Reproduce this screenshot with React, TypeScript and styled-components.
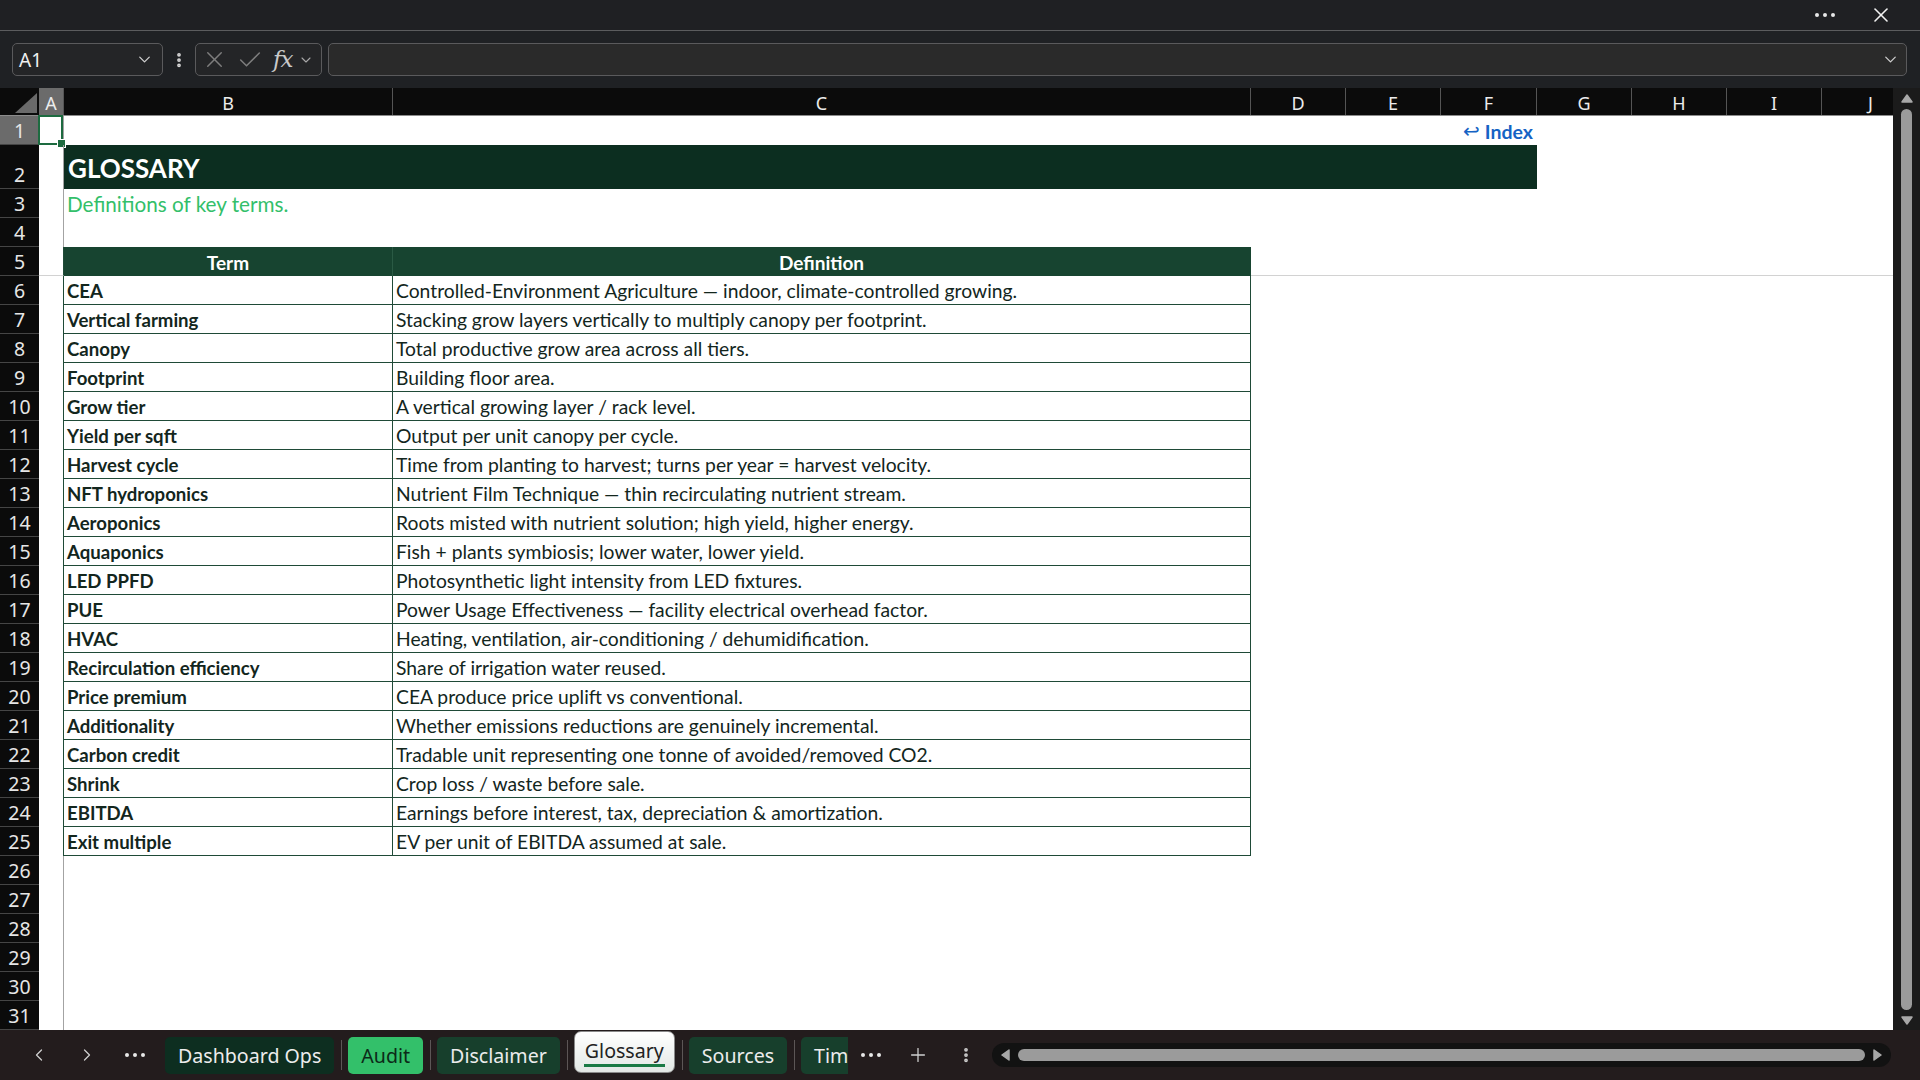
import React from "react";
import styled, { createGlobalStyle } from "styled-components";
import { X, Check, ChevronDown, ChevronLeft, ChevronRight, Plus, EllipsisVertical } from "lucide-react";

const GlobalStyle = createGlobalStyle`
  html, body {
    margin: 0;
    padding: 0;
    background: #1f2023;
    overflow: hidden;
  }
  * { box-sizing: border-box; }
`;

// column widths: row header, A, B, C, D..J
const COLS = "39px 25px 329px 858px 95px 95px 96px 95px 95px 95px 71px";
const LETTERS = ["A", "B", "C", "D", "E", "F", "G", "H", "I", "J"];

const UI_FONT = `"Noto Sans", "Open Sans", sans-serif`;
const SHEET_FONT = `Lato, "Noto Sans", sans-serif`;

const Window = styled.div`
  width: 1920px;
  height: 1080px;
  display: flex;
  flex-direction: column;
  background: #1f2023;
  font-family: ${UI_FONT};
`;

const TitleBar = styled.div`
  height: 31px;
  flex-shrink: 0;
  display: flex;
  align-items: center;
  justify-content: flex-end;
  gap: 34px;
  padding-right: 27px;
  border-bottom: 1px solid #5b5c5e;
  color: #f2f2f2;
`;

const Dots = styled.div`
  display: flex;
  gap: 4px;
  span {
    width: 4px;
    height: 4px;
    border-radius: 50%;
    background: #e8e8e8;
  }
`;

const FormulaBar = styled.div`
  height: 57px;
  flex-shrink: 0;
  display: flex;
  align-items: center;
  padding: 0 13px 0 12px;
  background: #1f2124;
`;

const NameBox = styled.div`
  width: 151px;
  height: 33px;
  border: 1px solid #5a5a5c;
  border-radius: 5px;
  background: #242527;
  display: flex;
  align-items: center;
  justify-content: space-between;
  padding: 0 8px 0 6px;
  color: #f0f0f0;
  font-size: 19px;
`;

const Kebab = styled.div`
  width: 32px;
  display: flex;
  justify-content: center;
  color: #d8d8d8;
`;

const FxBox = styled.div`
  width: 127px;
  height: 33px;
  border: 1px solid #5a5a5c;
  border-radius: 5px;
  background: #242527;
  display: flex;
  align-items: center;
  padding-left: 5px;
  gap: 2px;
  color: #7d7d7d;
`;

const FxText = styled.span`
  font-family: "DejaVu Serif", "Liberation Serif", serif;
  font-style: italic;
  font-size: 23px;
  color: #c9c9c9;
  margin-left: 7px;
  margin-right: 4px;
  letter-spacing: -1px;
  line-height: 1;
`;

const FormulaInput = styled.div`
  flex: 1;
  margin-left: 6px;
  height: 33px;
  border: 1px solid #5a5a5c;
  border-radius: 5px;
  background: #2a2a2a;
  display: flex;
  align-items: center;
  justify-content: flex-end;
  padding-right: 6px;
  color: #cfcfcf;
`;

const SheetArea = styled.div`
  flex: 1;
  display: flex;
  min-height: 0;
  background: #ffffff;
`;

const Grid = styled.div`
  width: 1893px;
  display: flex;
  flex-direction: column;
  overflow: hidden;
  background: #ffffff;
`;

const SheetRow = styled.div<{ $h: number }>`
  display: grid;
  grid-template-columns: ${COLS};
  height: ${({ $h }) => $h}px;
  flex-shrink: 0;
`;

const HeaderRow = styled(SheetRow)`
  background: #0b0b0b;
  border-bottom: 1px solid #8c8c8c;
`;

const Corner = styled.div`
  position: relative;
  &::after {
    content: "";
    position: absolute;
    right: 2px;
    bottom: 2px;
    width: 0;
    height: 0;
    border-left: 22px solid transparent;
    border-bottom: 20px solid #6a6a6a;
  }
`;

const ColHead = styled.div<{ $sel?: boolean }>`
  display: flex;
  align-items: center;
  justify-content: center;
  border-right: 1px solid #555;
  background: ${({ $sel }) => ($sel ? "#6b6b6b" : "transparent")};
  color: #ececec;
  font-size: 18px;
  padding-top: 2px;
  &:last-child { border-right: none; justify-content: flex-end; padding-right: 20px; }
`;

const RowHead = styled.div<{ $sel?: boolean }>`
  display: flex;
  align-items: flex-end;
  justify-content: center;
  padding-bottom: 0;
  background: ${({ $sel }) => ($sel ? "#6b6b6b" : "#0b0b0b")};
  border-bottom: 1px solid #454545;
  color: #e6e6e6;
  font-size: 19.5px;
  line-height: 27px;
`;

const ColA = styled.div<{ $edge?: string; $line?: boolean }>`
  border-right: 1px solid ${({ $edge }) => $edge || "#a3a3a3"};
  border-bottom: ${({ $line }) => ($line ? "1px solid #d2d2d2" : "none")};
  position: relative;
`;

const ActiveCell = styled.div`
  position: absolute;
  inset: -1px 0 0 -1px;
  border: 2px solid #1d6b40;
  &::after {
    content: "";
    position: absolute;
    right: -5px;
    bottom: -5px;
    width: 7px;
    height: 7px;
    background: #1d6b40;
    border: 1px solid #ffffff;
  }
`;

const Span = styled.div<{ $from: number; $to: number; $line?: boolean }>`
  grid-column: ${({ $from, $to }) => `${$from} / ${$to}`};
  border-bottom: ${({ $line }) => ($line ? "1px solid #d2d2d2" : "none")};
`;

const IndexLink = styled.div`
  grid-column: 6 / 8;
  display: flex;
  align-items: center;
  justify-content: flex-end;
  padding-right: 4px;
  padding-top: 1px;
  color: #1563c4;
  font-family: ${SHEET_FONT};
  font-weight: 700;
  font-size: 19.5px;
  gap: 5px;
`;

const Band = styled.div`
  grid-column: 3 / 8;
  background: #0c2e20;
  color: #ffffff;
  font-family: ${SHEET_FONT};
  font-weight: 700;
  font-size: 26px;
  display: flex;
  align-items: center;
  padding-left: 4px;
  padding-top: 1px;
`;

const Subtitle = styled.div`
  grid-column: 3 / -1;
  color: #33bf6a;
  font-family: ${SHEET_FONT};
  font-size: 20.7px;
  display: flex;
  align-items: center;
  padding-left: 3px;
`;

const TableHead = styled.div`
  background: #174430;
  color: #ffffff;
  font-family: ${SHEET_FONT};
  font-weight: 700;
  font-size: 19px;
  display: flex;
  align-items: center;
  justify-content: center;
  padding-top: 2px;
  border-right: 1px solid #2a5a44;
  &:nth-child(4) { border-right: 1px solid #174430; }
`;

const Cell = styled.div<{ $bold?: boolean }>`
  border-right: 1px solid #1f4a37;
  border-bottom: 1px solid #1f4a37;
  color: #13261d;
  font-family: ${SHEET_FONT};
  font-size: ${({ $bold }) => ($bold ? "18.6px" : "19.3px")};
  font-weight: ${({ $bold }) => ($bold ? 700 : 400)};
  display: flex;
  align-items: flex-end;
  padding: 0 0 2px 3px;
  white-space: nowrap;
  overflow: hidden;
`;

const VScroll = styled.div`
  width: 27px;
  background: #1b1b1b;
  display: flex;
  flex-direction: column;
  align-items: center;
  padding: 5px 0 4px;
`;

const VThumb = styled.div`
  flex: 1;
  width: 11px;
  margin: 4px 0;
  border-radius: 6px;
  background: #9b9b9b;
`;

const TabBar = styled.div`
  height: 50px;
  flex-shrink: 0;
  display: flex;
  align-items: center;
  background: #231c1d;
  padding-left: 15px;
`;

const NavButton = styled.div<{ $w?: number }>`
  width: ${({ $w }) => $w || 48}px;
  height: 36px;
  display: flex;
  align-items: center;
  justify-content: center;
  color: #cfcfcf;
  flex-shrink: 0;
`;

const TabStrip = styled.div`
  width: 683px;
  margin-left: 6px;
  display: flex;
  align-items: center;
  overflow: hidden;
  flex-shrink: 0;
  height: 100%;
`;

const Tab = styled.div<{ $bg: string; $fg: string }>`
  height: 37px;
  padding: 0 13px;
  border-radius: 5px;
  background: ${({ $bg }) => $bg};
  color: ${({ $fg }) => $fg};
  font-size: 19.6px;
  display: flex;
  align-items: center;
  white-space: nowrap;
  flex-shrink: 0;
`;

const ActiveTab = styled.div`
  height: 42px;
  margin-top: -6px;
  padding: 0 9px;
  border: 1px solid #8a8a8a;
  border-radius: 7px;
  background: linear-gradient(#ffffff, #e3e8e5);
  color: #222;
  font-size: 19.6px;
  display: flex;
  flex-direction: column;
  align-items: center;
  justify-content: center;
  flex-shrink: 0;
  span {
    border-bottom: 3px solid #1a7a45;
    line-height: 26px;
    padding: 0 1px;
  }
`;

const Sep = styled.div`
  width: 1px;
  height: 30px;
  background: #5c5656;
  margin: 0 6px 0 7px;
  flex-shrink: 0;
`;

const HScroll = styled.div`
  width: 899px;
  height: 24px;
  margin-left: 2px;
  border-radius: 12px;
  background: #121212;
  display: flex;
  align-items: center;
  padding: 0 8px;
  gap: 6px;
`;

const HThumb = styled.div`
  flex: 1;
  height: 12px;
  border-radius: 6px;
  background: #9b9b9b;
`;

const Tri = ({ dir }: { dir: "up" | "down" | "left" | "right" }) => {
  const pts = {
    up: "1,9 6,2 11,9",
    down: "1,3 6,10 11,3",
    left: "9,1 2,6 9,11",
    right: "3,1 10,6 3,11",
  }[dir];
  return (
    <svg width="12" height="12" viewBox="0 0 12 12">
      <polygon points={pts} fill="#a8a8a8" stroke="#a8a8a8" strokeWidth="1.5" strokeLinejoin="round" />
    </svg>
  );
};

const FilledDots = () => (
  <Dots>
    <span />
    <span />
    <span />
  </Dots>
);

const GLOSSARY: [string, string][] = [
  ["CEA", "Controlled-Environment Agriculture — indoor, climate-controlled growing."],
  ["Vertical farming", "Stacking grow layers vertically to multiply canopy per footprint."],
  ["Canopy", "Total productive grow area across all tiers."],
  ["Footprint", "Building floor area."],
  ["Grow tier", "A vertical growing layer / rack level."],
  ["Yield per sqft", "Output per unit canopy per cycle."],
  ["Harvest cycle", "Time from planting to harvest; turns per year = harvest velocity."],
  ["NFT hydroponics", "Nutrient Film Technique — thin recirculating nutrient stream."],
  ["Aeroponics", "Roots misted with nutrient solution; high yield, higher energy."],
  ["Aquaponics", "Fish + plants symbiosis; lower water, lower yield."],
  ["LED PPFD", "Photosynthetic light intensity from LED fixtures."],
  ["PUE", "Power Usage Effectiveness — facility electrical overhead factor."],
  ["HVAC", "Heating, ventilation, air-conditioning / dehumidification."],
  ["Recirculation efficiency", "Share of irrigation water reused."],
  ["Price premium", "CEA produce price uplift vs conventional."],
  ["Additionality", "Whether emissions reductions are genuinely incremental."],
  ["Carbon credit", "Tradable unit representing one tonne of avoided/removed CO2."],
  ["Shrink", "Crop loss / waste before sale."],
  ["EBITDA", "Earnings before interest, tax, depreciation & amortization."],
  ["Exit multiple", "EV per unit of EBITDA assumed at sale."],
];

const TABS = [
  { name: "Dashboard Ops", bg: "#0d2e20", fg: "#ececec" },
  { name: "Audit", bg: "#33c06a", fg: "#0c2a18" },
  { name: "Disclaimer", bg: "#173f2c", fg: "#ececec" },
];

const App: React.FC = () => {
  return (
    <Window>
      <GlobalStyle />
      <TitleBar>
        <FilledDots />
        <X size={24} strokeWidth={1.6} />
      </TitleBar>

      <FormulaBar>
        <NameBox>
          <span>A1</span>
          <ChevronDown size={19} strokeWidth={1.6} color="#d0d0d0" />
        </NameBox>
        <Kebab>
          <EllipsisVertical size={18} strokeWidth={3} />
        </Kebab>
        <FxBox>
          <X size={27} strokeWidth={1.3} />
          <Check size={28} strokeWidth={1.3} style={{ marginLeft: 6 }} />
          <FxText>fx</FxText>
          <ChevronDown size={16} strokeWidth={1.6} color="#a8a8a8" />
        </FxBox>
        <FormulaInput>
          <ChevronDown size={19} strokeWidth={1.6} />
        </FormulaInput>
      </FormulaBar>

      <SheetArea>
        <Grid>
          <HeaderRow $h={28}>
            <Corner />
            {LETTERS.map((l) => (
              <ColHead key={l} $sel={l === "A"}>
                {l}
              </ColHead>
            ))}
          </HeaderRow>

          <SheetRow $h={29}>
            <RowHead $sel>1</RowHead>
            <ColA>
              <ActiveCell />
            </ColA>
            <Span $from={3} $to={6} />
            <IndexLink>
              <span style={{ fontWeight: 400 }}>↩</span> Index
            </IndexLink>
          </SheetRow>

          <SheetRow $h={44}>
            <RowHead>2</RowHead>
            <ColA />
            <Band>GLOSSARY</Band>
          </SheetRow>

          <SheetRow $h={29}>
            <RowHead>3</RowHead>
            <ColA />
            <Subtitle>Definitions of key terms.</Subtitle>
          </SheetRow>

          <SheetRow $h={29}>
            <RowHead>4</RowHead>
            <ColA />
          </SheetRow>

          <SheetRow $h={29}>
            <RowHead>5</RowHead>
            <ColA $edge="#1f4a37" $line />
            <TableHead>Term</TableHead>
            <TableHead>Definition</TableHead>
            <Span $from={5} $to={-1} $line />
          </SheetRow>

          {GLOSSARY.map(([term, def], i) => (
            <SheetRow $h={29} key={term}>
              <RowHead>{i + 6}</RowHead>
              <ColA $edge="#1f4a37" />
              <Cell $bold>{term}</Cell>
              <Cell>{def}</Cell>
            </SheetRow>
          ))}

          {[26, 27, 28, 29, 30, 31].map((n) => (
            <SheetRow $h={29} key={n}>
              <RowHead>{n}</RowHead>
              <ColA />
            </SheetRow>
          ))}
        </Grid>
        <VScroll>
          <Tri dir="up" />
          <VThumb />
          <Tri dir="down" />
        </VScroll>
      </SheetArea>

      <TabBar>
        <NavButton>
          <ChevronLeft size={20} strokeWidth={1.5} />
        </NavButton>
        <NavButton>
          <ChevronRight size={20} strokeWidth={1.5} />
        </NavButton>
        <NavButton>
          <FilledDots />
        </NavButton>
        <TabStrip>
          {TABS.map((t, i) => (
            <React.Fragment key={t.name}>
              {i > 0 && <Sep />}
              <Tab $bg={t.bg} $fg={t.fg}>
                {t.name}
              </Tab>
            </React.Fragment>
          ))}
          <Sep />
          <ActiveTab>
            <span>Glossary</span>
          </ActiveTab>
          <Sep />
          <Tab $bg="#173f2c" $fg="#ececec">
            Sources
          </Tab>
          <Sep />
          <Tab $bg="#173f2c" $fg="#ececec">
            Timeline
          </Tab>
        </TabStrip>
        <NavButton $w={46}>
          <FilledDots />
        </NavButton>
        <NavButton $w={48}>
          <Plus size={22} strokeWidth={1.4} />
        </NavButton>
        <NavButton $w={48}>
          <EllipsisVertical size={18} strokeWidth={3} />
        </NavButton>
        <HScroll>
          <Tri dir="left" />
          <HThumb />
          <Tri dir="right" />
        </HScroll>
      </TabBar>
    </Window>
  );
};

export default App;
